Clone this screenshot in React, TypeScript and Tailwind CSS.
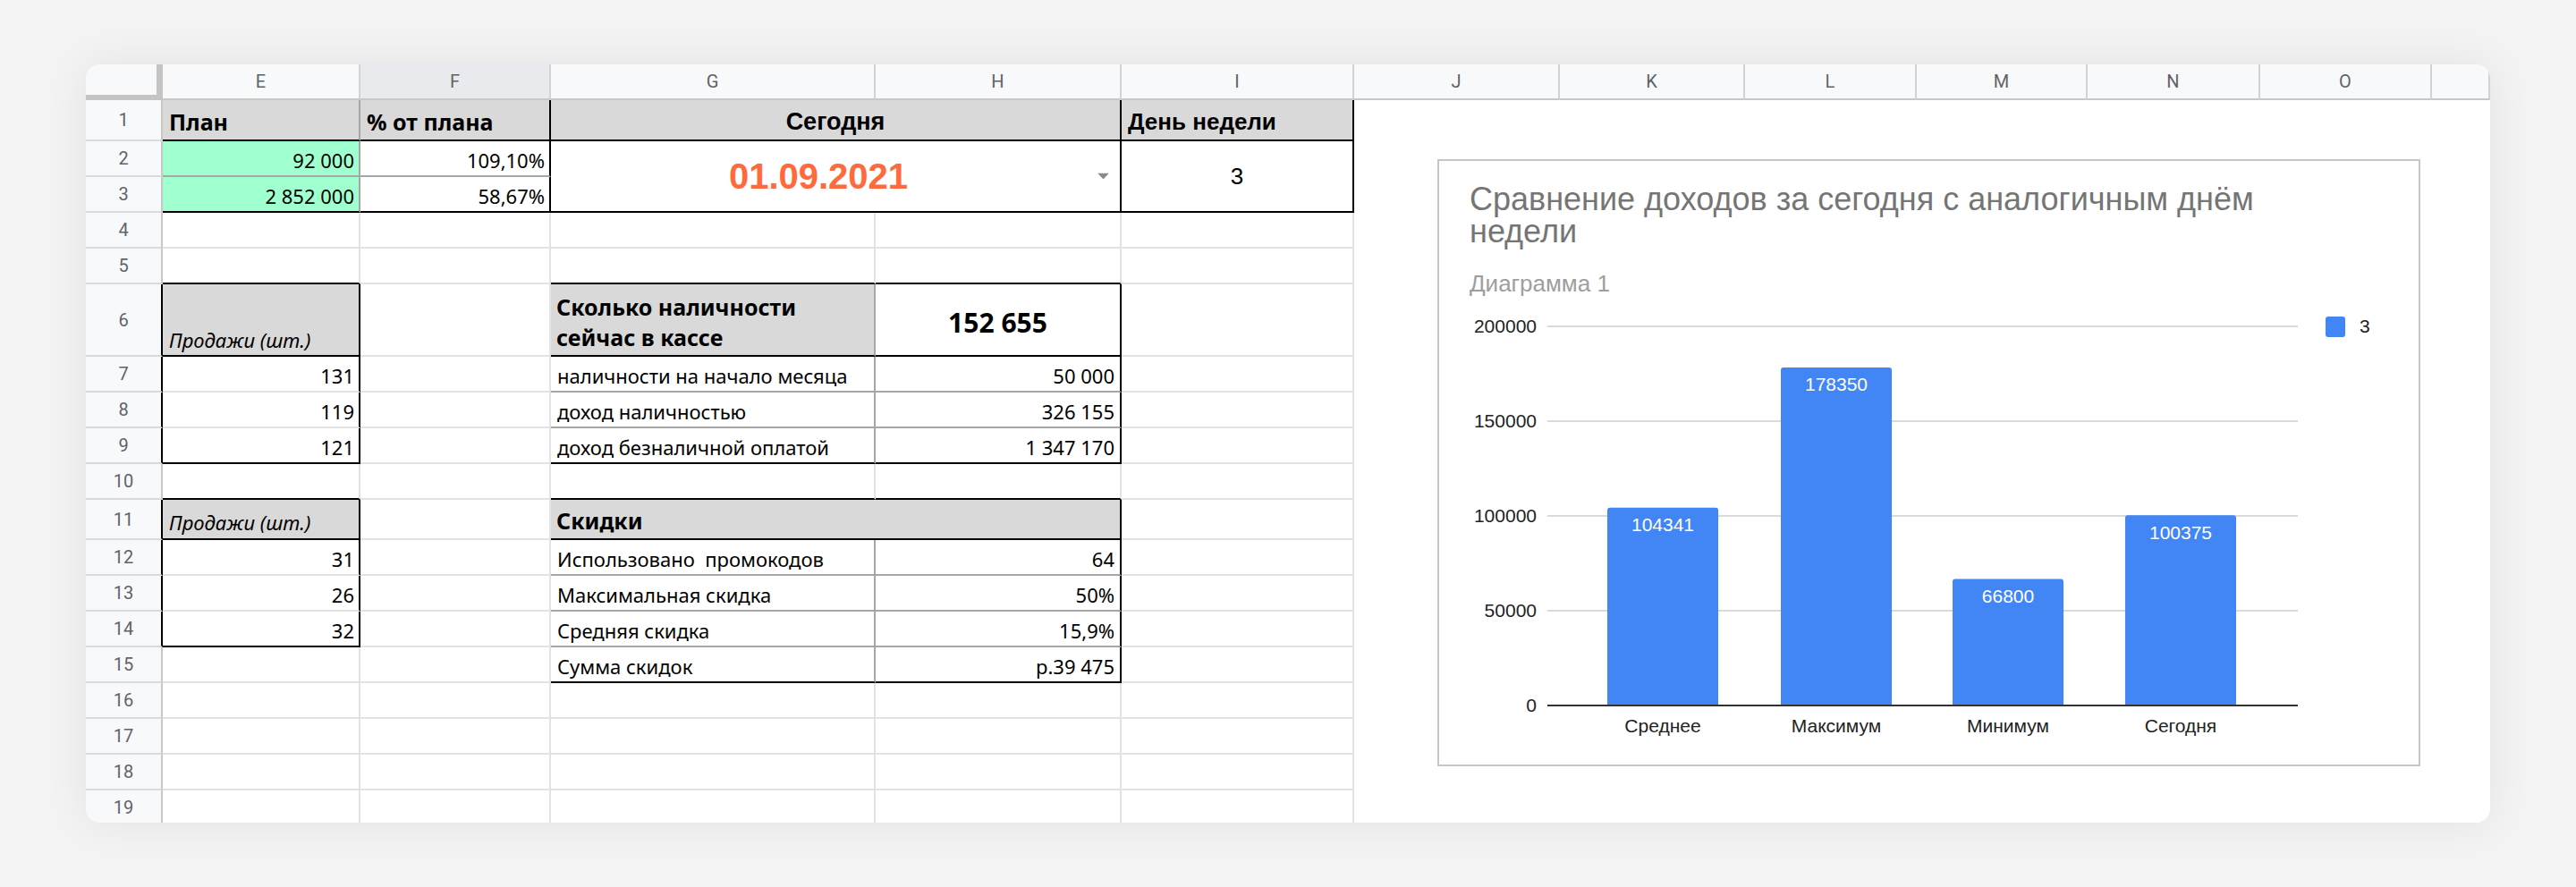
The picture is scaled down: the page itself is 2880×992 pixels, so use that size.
import React from 'react';

type Ln = 'g' | 'k' | 'm';

const RB: Record<Ln, string> = {
  g: 'border-r-2 border-r-[#e3e3e3]',
  k: 'border-r-2 border-r-black',
  m: 'border-r-2 border-r-[#a6a6a6]',
};
const BB: Record<Ln, string> = {
  g: 'border-b-2 border-b-[#e3e3e3]',
  k: 'border-b-2 border-b-black',
  m: 'border-b-2 border-b-[#a6a6a6]',
};

const cols = ['E', 'F', 'G', 'H', 'I', 'J', 'K', 'L', 'M', 'N', 'O', ''];

const Cell = ({ r = 'g', b = 'g', className = '', children }: { r?: Ln; b?: Ln; className?: string; children?: React.ReactNode }) => (
  <div className={`relative flex min-w-0 whitespace-nowrap ${RB[r]} ${BB[b]} ${className}`}>{children}</div>
);

const RowHead = ({ n, dark = false }: { n: number; dark?: boolean }) => (
  <div
    className={`flex items-center justify-center bg-[#f8f9fa] border-b-2 border-b-[#dadada] font-['Roboto',sans-serif] text-[20px] text-[#5f6368] ${
      dark ? 'border-r-2 border-r-black' : 'border-r-2 border-r-[#c7c7c7]'
    }`}
  >
    {n}
  </div>
);

// left / right text inside a cell, bottom aligned like sheets does
const L = 'items-end pl-[7px] pb-[2px]';
const R = 'items-end justify-end pr-[5px] pb-[2px]';
const HEAD = 'bg-[#d9d9d9] font-bold text-[25px]';

const bars = [
  { label: 'Среднее', value: 104341, x: 188 },
  { label: 'Максимум', value: 178350, x: 382 },
  { label: 'Минимум', value: 66800, x: 574 },
  { label: 'Сегодня', value: 100375, x: 767 },
];

const Chart = () => {
  const y0 = 457;
  const k = 424 / 200000;
  return (
    <div className="ml-[93px] mt-[66px] w-[1099px] h-[679px] border-2 border-[#c6c6c6] bg-white font-['Liberation_Sans',Arial,sans-serif]">
      <div className="pl-[34px] pt-[25px] text-[36px] leading-[36px] text-[#757575]">
        Сравнение доходов за сегодня с аналогичным днём
        <br />
        недели
      </div>
      <div className="pl-[34px] mt-[25px] text-[26px] leading-[30px] text-[#9e9e9e]">Диаграмма 1</div>
      <svg width="1095" height="523" className="block" fontFamily="'Liberation Sans', Arial, sans-serif">
        {[200000, 150000, 100000, 50000].map((v) => (
          <line key={v} x1="121" x2="960" y1={y0 - v * k} y2={y0 - v * k} stroke="#dadada" strokeWidth="2" />
        ))}
        {[200000, 150000, 100000, 50000, 0].map((v) => (
          <text key={v} x="109" y={y0 - v * k} dy="0.35em" textAnchor="end" fontSize="21" fill="#222">
            {v}
          </text>
        ))}
        {bars.map((b) => {
          const h = b.value * k;
          const top = y0 - h;
          return (
            <g key={b.label}>
              <path
                d={`M${b.x} ${y0} V${top + 3} Q${b.x} ${top} ${b.x + 3} ${top} H${b.x + 121} Q${b.x + 124} ${top} ${b.x + 124} ${top + 3} V${y0} Z`}
                fill="#4285f4"
              />
              <text x={b.x + 62} y={top + 19} dy="0.35em" textAnchor="middle" fontSize="21" fill="#fff">
                {b.value}
              </text>
              <text x={b.x + 62} y="480" dy="0.35em" textAnchor="middle" fontSize="21" fill="#222">
                {b.label}
              </text>
            </g>
          );
        })}
        <line x1="121" x2="960" y1={y0} y2={y0} stroke="#333" strokeWidth="2" />
        <rect x="991" y="22" width="22" height="23" rx="3" fill="#4285f4" />
        <text x="1029" y="33" dy="0.35em" fontSize="21" fill="#222">
          3
        </text>
      </svg>
    </div>
  );
};

export default function App() {
  return (
    <div className="w-[2880px] h-[992px] overflow-hidden bg-[#f3f3f3] pt-[72px] pl-[96px]">
      <div className="w-[2688px] h-[848px] rounded-[16px] overflow-hidden bg-white shadow-[0_0_48px_rgba(0,0,0,0.07)]">
        {/* column letters */}
        <div className="grid grid-cols-[86px_221px_213px_363px_275px_260px_230px_207px_192px_191px_193px_192px_65px] h-[40px] font-['Roboto',sans-serif] text-[20px] text-[#5f6368]">
          <div className="bg-[#f8f9fa] border-r-[7px] border-b-[6px] border-[#c4c4c4]" />
          {cols.map((c, i) => (
            <div
              key={i}
              className={`flex items-center justify-center border-r-2 border-r-[#d3d3d3] border-b-2 border-b-[#c7c7c7] ${
                c === 'F' ? 'bg-[#e8eaed]' : 'bg-[#f8f9fa]'
              }`}
            >
              {c}
            </div>
          ))}
        </div>

        <div className="flex">
          {/* sheet cells */}
          <div className="grid grid-cols-[86px_221px_213px_363px_275px_260px] grid-rows-[46px_40px_40px_40px_40px_81px_40px_40px_40px_40px_45px_40px_40px_40px_40px_40px_40px_40px_40px] font-['Noto_Sans',sans-serif] text-[22px] leading-[30px] text-black">
            {/* 1 */}
            <RowHead n={1} />
            <Cell r="m" b="k" className={`${HEAD} text-[24px] items-end pl-[7px] pb-[5px]`}>План</Cell>
            <Cell r="k" b="k" className={`${HEAD} text-[24px] items-end pl-[7px] pb-[5px]`}>% от плана</Cell>
            <Cell r="k" b="k" className="col-span-2 bg-[#d9d9d9] items-end justify-center pb-[5px] font-['Liberation_Sans',Arial,sans-serif] font-bold text-[27px]">
              Сегодня
            </Cell>
            <Cell r="k" b="k" className="bg-[#d9d9d9] items-end pl-[7px] pb-[5px] font-['Liberation_Sans',Arial,sans-serif] font-bold text-[26px]">
              День недели
            </Cell>

            {/* 2-3 */}
            <RowHead n={2} />
            <Cell r="m" b="m" className={`${R} bg-[#9fffcf]`}>92 000</Cell>
            <Cell r="k" b="m" className={R}>109,10%</Cell>
            <Cell r="k" b="k" className="col-span-2 row-span-2 items-center justify-center pr-[38px] font-['Liberation_Sans',Arial,sans-serif] font-bold text-[40px] text-[#ff6a3d]">
              01.09.2021
              <svg className="absolute right-[12px] top-1/2 -translate-y-1/2" width="13" height="7" viewBox="0 0 13 7">
                <path d="M0 0 H13 L6.5 7 Z" fill="#8a8a8a" />
              </svg>
            </Cell>
            <Cell r="k" b="k" className="row-span-2 items-center justify-center font-['Liberation_Sans',Arial,sans-serif] text-[26px]">
              3
            </Cell>
            <RowHead n={3} />
            <Cell r="m" b="k" className={`${R} bg-[#9fffcf]`}>2 852 000</Cell>
            <Cell r="k" b="k" className={R}>58,67%</Cell>

            {/* 4 */}
            <RowHead n={4} />
            <Cell />
            <Cell />
            <Cell />
            <Cell />
            <Cell />

            {/* 5 */}
            <RowHead n={5} />
            <Cell b="k" />
            <Cell />
            <Cell b="k" />
            <Cell b="k" />
            <Cell />

            {/* 6 */}
            <RowHead n={6} dark />
            <Cell r="k" b="k" className={`${L} pb-[2px] bg-[#d9d9d9] italic`}>Продажи (шт.)</Cell>
            <Cell />
            <Cell r="m" b="k" className={`${HEAD} items-end pl-[6px] pb-[3px] leading-[34px] whitespace-normal`}>
              Сколько наличности
              <br />
              сейчас в кассе
            </Cell>
            <Cell r="k" b="k" className="items-center justify-center pt-[7px] font-bold text-[30px]">152 655</Cell>
            <Cell />

            {/* 7-9 */}
            {[
              ['131', 'наличности на начало месяца', '50 000'],
              ['119', 'доход наличностью', '326 155'],
              ['121', 'доход безналичной оплатой', '1 347 170'],
            ].map(([a, label, val], i) => (
              <React.Fragment key={label}>
                <RowHead n={7 + i} dark />
                <Cell r="k" b={i === 2 ? 'k' : 'g'} className={R}>{a}</Cell>
                <Cell />
                <Cell r="m" b={i === 2 ? 'k' : 'm'} className={`${L} pl-[6px]`}>{label}</Cell>
                <Cell r="k" b={i === 2 ? 'k' : 'm'} className={`${R} pr-[6px]`}>{val}</Cell>
                <Cell />
              </React.Fragment>
            ))}

            {/* 10 */}
            <RowHead n={10} />
            <Cell b="k" />
            <Cell />
            <Cell b="k" />
            <Cell b="k" />
            <Cell />

            {/* 11 */}
            <RowHead n={11} dark />
            <Cell r="k" b="k" className={`${L} pb-[3px] bg-[#d9d9d9] italic`}>Продажи (шт.)</Cell>
            <Cell />
            <Cell r="k" b="k" className={`col-span-2 ${HEAD} items-end pl-[6px] pb-[5px]`}>Скидки</Cell>
            <Cell />

            {/* 12-15 */}
            {[
              ['31', 'Использовано  промокодов', '64'],
              ['26', 'Максимальная скидка', '50%'],
              ['32', 'Средняя скидка', '15,9%'],
              ['', 'Сумма скидок', 'р.39 475'],
            ].map(([a, label, val], i) => (
              <React.Fragment key={label}>
                <RowHead n={12 + i} dark={i < 3} />
                {i < 3 ? (
                  <Cell r="k" b={i === 2 ? 'k' : 'g'} className={R}>{a}</Cell>
                ) : (
                  <Cell />
                )}
                <Cell />
                <Cell r="m" b={i === 3 ? 'k' : 'm'} className={`${L} pl-[6px] whitespace-pre`}>{label}</Cell>
                <Cell r="k" b={i === 3 ? 'k' : 'm'} className={`${R} pr-[6px]`}>{val}</Cell>
                <Cell />
              </React.Fragment>
            ))}

            {/* 16-19 */}
            {[16, 17, 18, 19].map((n) => (
              <React.Fragment key={n}>
                <RowHead n={n} />
                <Cell />
                <Cell />
                <Cell />
                <Cell />
                <Cell />
              </React.Fragment>
            ))}
          </div>

          {/* chart area */}
          <div className="flex-1 bg-white">
            <Chart />
          </div>
        </div>
      </div>
    </div>
  );
}
